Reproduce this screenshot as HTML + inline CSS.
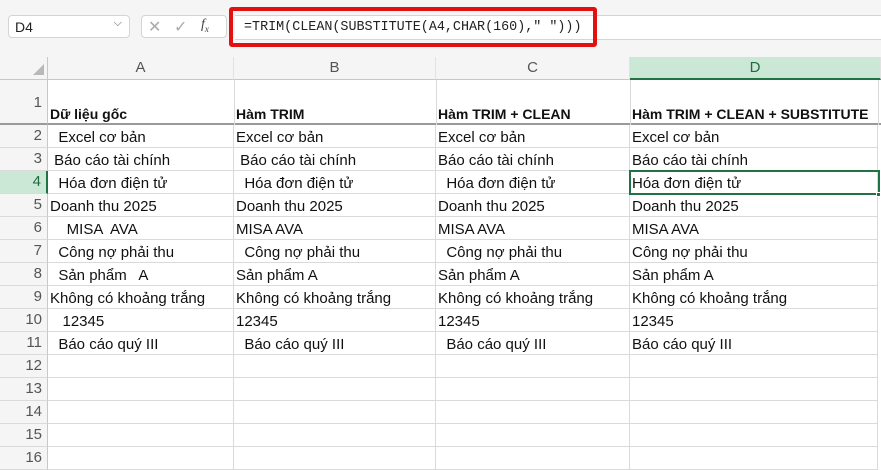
<!DOCTYPE html><html><head><meta charset="utf-8"><style>
*{margin:0;padding:0;box-sizing:border-box}
body{width:881px;height:460px;overflow:hidden;background:#fff;position:relative;font-family:"Liberation Sans","DejaVu Sans",sans-serif;}
.a{position:absolute}
.top{left:0;top:0;width:881px;height:57px;background:#f5f5f5}
.nb{left:8px;top:15px;width:122px;height:23px;background:#fff;border:1px solid #d4d4d4;border-radius:4px;font-size:14px;padding:3px 0 0 6px;color:#222}
.fb{left:141px;top:15px;width:86px;height:23px;background:#fff;border:1px solid #d4d4d4;border-radius:4px}
.fx{left:235px;top:15px;width:646px;height:25px;background:#fff;border-top:1px solid #d4d4d4;border-bottom:1px solid #d4d4d4;font-family:"Liberation Mono",monospace;font-size:13.4px;padding:4px 0 0 9px;color:#222}
.red{left:229px;top:7px;width:368px;height:40px;border:4px solid #e41010;border-radius:3px}
.ch{top:57px;height:23px;background:#f5f5f5;border-right:1px solid #e2e2e2;border-bottom:1px solid #c8c8c8;font-size:15px;color:#555;text-align:center;line-height:22px}
.rh{left:0;width:48px;background:#f5f5f5;border-right:1px solid #c8c8c8;border-bottom:1px solid #dadada;font-size:15px;color:#555;text-align:right;padding-right:5px}
.c{height:23px;border-right:1px solid #dadada;border-bottom:1px solid #dadada;font-size:15px;color:#111;white-space:pre;padding:4px 0 0 2px;line-height:17px;overflow:hidden}
.h{font-weight:bold;font-size:14px;color:#111;white-space:pre;padding-left:2px}
</style></head><body>
<div class="a top"></div>
<div class="a nb">D4<span style="position:absolute;right:7px;top:1px;color:#555;font-size:11px">&#x2335;</span></div>
<div class="a fb"><span class="a" style="left:6px;top:1px;color:#aaa;font-size:16px">✕</span><span class="a" style="left:32px;top:1px;color:#aaa;font-size:16px">✓</span><span class="a" style="left:59px;top:1px;color:#444;font-size:14px;font-style:italic;font-family:'Liberation Serif',serif">f<sub style="font-size:9px">x</sub></span></div>
<div class="a fx">=TRIM(CLEAN(SUBSTITUTE(A4,CHAR(160),"&nbsp;")))</div>
<div class="a red"></div>
<div class="a" style="left:0;top:57px;width:48px;height:23px;background:#f5f5f5;border-right:1px solid #c8c8c8;border-bottom:1px solid #c8c8c8"></div>
<div class="a" style="left:33px;top:64px;width:0;height:0;border-left:11px solid transparent;border-bottom:11px solid #b8b8b8"></div>
<div class="a ch" style="left:48px;width:186px">A</div>
<div class="a ch" style="left:234px;width:202px">B</div>
<div class="a ch" style="left:436px;width:194px">C</div>
<div class="a ch" style="left:630px;width:251px;background:#cbe8d6;border-bottom:2px solid #217346;color:#1f6b3f">D</div>
<div class="a rh" style="top:80px;height:45px;padding-top:14px;border-bottom:2px solid #9a9a9a">1</div>
<div class="a" style="left:48px;top:80px;width:833px;height:45px;border-bottom:2px solid #9a9a9a"></div>
<div class="a" style="left:234px;top:80px;height:45px;border-left:1px solid #dadada"></div>
<div class="a" style="left:436px;top:80px;height:45px;border-left:1px solid #dadada"></div>
<div class="a" style="left:630px;top:80px;height:45px;border-left:1px solid #dadada"></div>
<div class="a" style="left:878px;top:80px;height:45px;border-left:1px solid #dadada"></div>
<div class="a h" style="left:48px;top:106px">Dữ liệu gốc</div>
<div class="a h" style="left:234px;top:106px">Hàm TRIM</div>
<div class="a h" style="left:436px;top:106px">Hàm TRIM + CLEAN</div>
<div class="a h" style="left:630px;top:106px">Hàm TRIM + CLEAN + SUBSTITUTE</div>
<div id="g"></div>
<script>
var d=[
["  Excel cơ bản","Excel cơ bản","Excel cơ bản","Excel cơ bản"],
[" Báo cáo tài chính"," Báo cáo tài chính","Báo cáo tài chính","Báo cáo tài chính"],
["  Hóa đơn điện tử","  Hóa đơn điện tử","  Hóa đơn điện tử","Hóa đơn điện tử"],
["Doanh thu 2025","Doanh thu 2025","Doanh thu 2025","Doanh thu 2025"],
["    MISA  AVA","MISA AVA","MISA AVA","MISA AVA"],
["  Công nợ phải thu","  Công nợ phải thu","  Công nợ phải thu","Công nợ phải thu"],
["  Sản phẩm   A","Sản phẩm A","Sản phẩm A","Sản phẩm A"],
["Không có khoảng trắng","Không có khoảng trắng","Không có khoảng trắng","Không có khoảng trắng"],
["   12345","12345","12345","12345"],
["  Báo cáo quý III","  Báo cáo quý III","  Báo cáo quý III","Báo cáo quý III"],
["","","",""],["","","",""],["","","",""],["","","",""],["","","",""]];
var L=[48,234,436,630],W=[186,202,194,248],h="";
for(var i=0;i<d.length;i++){var t=125+i*23;
var sel=i==2;
h+='<div class="a rh" style="top:'+t+'px;height:23px;line-height:22px;'+(sel?'background:#cbe8d6;color:#1f6b3f;border-right:2px solid #217346':'')+'">'+(i+2)+'</div>';
for(var j=0;j<4;j++)h+='<div class="a c" style="left:'+L[j]+'px;top:'+t+'px;width:'+W[j]+'px">'+d[i][j]+'</div>';}
document.getElementById('g').innerHTML=h;
</script>
<div class="a" style="left:629px;top:170px;width:251px;height:25px;border:2px solid #217346"></div>
<div class="a" style="left:876px;top:192px;width:5px;height:5px;background:#217346;border:1px solid #fff"></div>
</body></html>
